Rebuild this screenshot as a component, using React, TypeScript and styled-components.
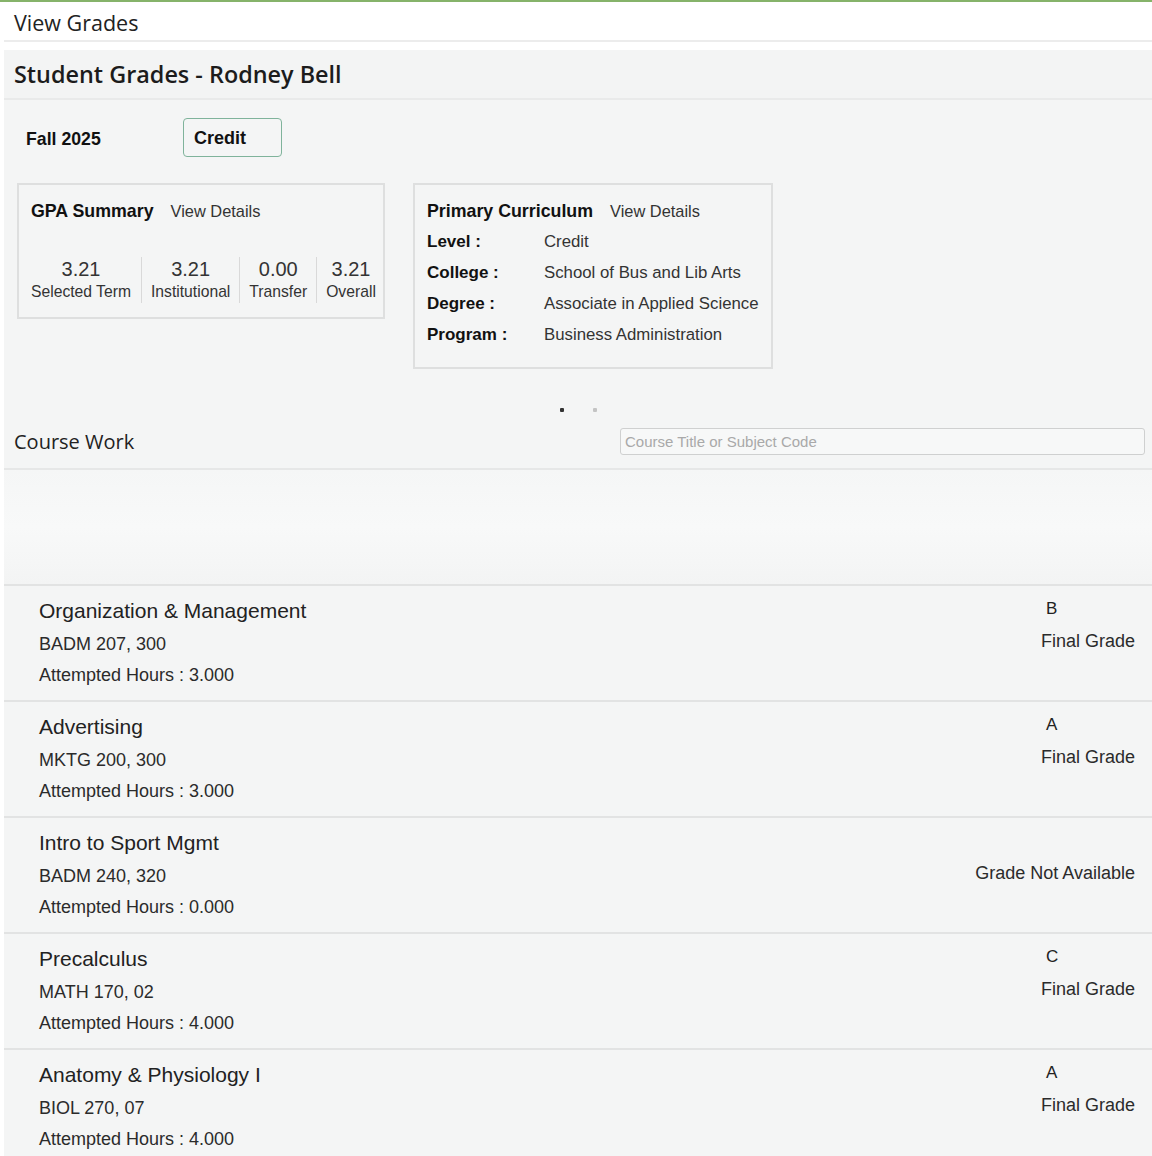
import styled, { createGlobalStyle } from "styled-components";

const GlobalStyle = createGlobalStyle`
    body {
        margin: 0;
        background: #ffffff;
        font-family: "Liberation Sans", Arial, sans-serif;
        color: #222;
    }
    * { box-sizing: border-box; }
`;

interface Course {
    title: string
    code: string
    hours: string
    grade?: string
}

const courses: Course[] = [
    {title: "Organization & Management", code: "BADM 207, 300", hours: "3.000", grade: "B"},
    {title: "Advertising", code: "MKTG 200, 300", hours: "3.000", grade: "A"},
    {title: "Intro to Sport Mgmt", code: "BADM 240, 320", hours: "0.000"},
    {title: "Precalculus", code: "MATH 170, 02", hours: "4.000", grade: "C"},
    {title: "Anatomy & Physiology I", code: "BIOL 270, 07", hours: "4.000", grade: "A"},
];

const gpa = [
    {value: "3.21", label: "Selected Term"},
    {value: "3.21", label: "Institutional"},
    {value: "0.00", label: "Transfer"},
    {value: "3.21", label: "Overall"},
];

const curriculum = [
    {label: "Level :", value: "Credit"},
    {label: "College :", value: "School of Bus and Lib Arts"},
    {label: "Degree :", value: "Associate in Applied Science"},
    {label: "Program :", value: "Business Administration"},
];

const Page = styled.div`
    padding-left: 4px;
    border-top: 2px solid #86b36a;
    min-height: 1156px;
    background: #ffffff;
`;

const TopBar = styled.div`
    height: 40px;
    display: flex;
    align-items: center;
    padding: 2px 0 0 10px;
    font-family: "Open Sans", sans-serif;
    font-size: 21.5px;
    color: #222;
    border-bottom: 2px solid #ececec;
`;

const TitleBar = styled.div`
    margin-top: 8px;
    height: 50px;
    display: flex;
    align-items: center;
    padding-left: 10px;
    background: #f3f4f4;
    border-bottom: 2px solid #e9eaea;
    font-family: "Open Sans", sans-serif;
    font-weight: 600;
    font-size: 23.4px;
    color: #1c1c1c;
`;

const Content = styled.div`
    background: #f4f5f5;
`;

const TermRow = styled.div`
    display: flex;
    align-items: center;
    padding: 17px 0 0 22px;
    height: 57px;
`;

const TermLabel = styled.div`
    width: 157px;
    padding-top: 4px;
    font-weight: bold;
    font-size: 17.7px;
    color: #111;
`;

const LevelButton = styled.div`
    width: 99px;
    height: 39px;
    display: flex;
    align-items: center;
    padding: 3px 0 0 10px;
    border: 1.5px solid #7fb39b;
    border-radius: 4px;
    font-weight: bold;
    font-size: 18px;
    color: #111;
`;

const Cards = styled.div`
    display: flex;
    align-items: flex-start;
    gap: 28px;
    padding: 26px 0 0 13px;
`;

const Card = styled.div<{ $width: number }>`
    width: ${p => p.$width}px;
    border: 2px solid #dedfdf;
    background: #f4f5f5;
    padding: 14px 8px 0 12px;
`;

const CardHead = styled.div`
    display: flex;
    align-items: center;
    gap: 17px;
    height: 24px;
    white-space: nowrap;
`;

const CardTitle = styled.span`
    font-weight: bold;
    font-size: 17.8px;
    color: #111;
`;

const CardLink = styled.span`
    font-size: 16.4px;
    color: #333;
`;

const Stats = styled.div`
    display: flex;
    margin-top: 34px;
    padding-bottom: 14px;
`;

const Stat = styled.div`
    display: flex;
    flex-direction: column;
    align-items: center;
    padding: 0 9px;
    border-left: 1px solid #d9d9d9;
    white-space: nowrap;

    &:first-child {
        padding-left: 0;
        padding-right: 10px;
        border-left: none;
    }
`;

const StatValue = styled.div`
    font-size: 20px;
    line-height: 24px;
    color: #333;
`;

const StatLabel = styled.div`
    font-size: 15.7px;
    line-height: 22px;
    color: #333;
`;

const InfoRows = styled.div`
    padding: 3px 0 17px 0;
`;

const InfoRow = styled.div`
    display: flex;
    height: 31px;
    align-items: center;
    white-space: nowrap;
`;

const InfoLabel = styled.div`
    width: 117px;
    flex-shrink: 0;
    font-weight: bold;
    font-size: 17px;
    color: #111;
`;

const InfoValue = styled.div`
    font-size: 16.8px;
    color: #333;
`;

const Dots = styled.div`
    display: flex;
    justify-content: center;
    gap: 29px;
    padding: 39px 0 0 0;
    height: 43px;
`;

const Dot = styled.span<{ $active?: boolean }>`
    width: 4px;
    height: 4px;
    border-radius: 1px;
    background: ${p => p.$active ? "#333" : "#c4c4c4"};
`;

const WorkHeader = styled.div`
    display: flex;
    align-items: center;
    justify-content: space-between;
    height: 58px;
    padding: 3px 7px 0 10px;
    border-bottom: 2px solid #e6e7e7;
`;

const WorkTitle = styled.div`
    font-family: "Open Sans", sans-serif;
    font-size: 20px;
    color: #222;
`;

const Search = styled.input`
    width: 525px;
    height: 27px;
    border: 1px solid #cfd0d0;
    border-radius: 3px;
    background: #f7f8f8;
    padding: 0 4px;
    font-family: "Liberation Sans", Arial, sans-serif;
    font-size: 15px;

    &::placeholder {
        color: #a9a9a9;
    }
`;

const Blank = styled.div`
    height: 116px;
    background: linear-gradient(180deg, #f5f6f6 0%, #f8f9f9 50%, #f3f4f4 100%);
    border-bottom: 2px solid #e2e3e3;
`;

const Row = styled.div`
    display: flex;
    justify-content: space-between;
    height: 116px;
    padding: 10px 17px 0 35px;
    border-bottom: 2px solid #e2e3e3;
`;

const CourseInfo = styled.div`
    display: flex;
    flex-direction: column;
`;

const CourseTitle = styled.div`
    font-size: 21px;
    line-height: 30px;
    margin-bottom: 3px;
    color: #222;
`;

const CourseLine = styled.div`
    font-size: 18px;
    line-height: 31px;
    color: #2b2b2b;
`;

const GradeBox = styled.div`
    display: flex;
    flex-direction: column;
    margin-top: -4px;
`;

const GradeLetter = styled.div`
    font-size: 17px;
    line-height: 33px;
    height: 33px;
    padding-left: 5px;
    color: #222;
`;

const GradeLabel = styled.div`
    font-size: 18px;
    line-height: 33px;
    color: #2b2b2b;
`;

function CourseRow({course}: { course: Course }) {
    return (
        <Row>
            <CourseInfo>
                <CourseTitle>{course.title}</CourseTitle>
                <CourseLine>{course.code}</CourseLine>
                <CourseLine>Attempted Hours : {course.hours}</CourseLine>
            </CourseInfo>
            <GradeBox>
                <GradeLetter>{course.grade ?? ""}</GradeLetter>
                <GradeLabel>{course.grade ? "Final Grade" : "Grade Not Available"}</GradeLabel>
            </GradeBox>
        </Row>
    );
}

export default function App() {
    return (
        <>
            <GlobalStyle/>
            <Page>
                <TopBar>View Grades</TopBar>
                <TitleBar>Student Grades - Rodney Bell</TitleBar>
                <Content>
                    <TermRow>
                        <TermLabel>Fall 2025</TermLabel>
                        <LevelButton>Credit</LevelButton>
                    </TermRow>

                    <Cards>
                        <Card $width={368}>
                            <CardHead>
                                <CardTitle>GPA Summary</CardTitle>
                                <CardLink>View Details</CardLink>
                            </CardHead>
                            <Stats>
                                {gpa.map(g => (
                                    <Stat key={g.label}>
                                        <StatValue>{g.value}</StatValue>
                                        <StatLabel>{g.label}</StatLabel>
                                    </Stat>
                                ))}
                            </Stats>
                        </Card>

                        <Card $width={360}>
                            <CardHead>
                                <CardTitle>Primary Curriculum</CardTitle>
                                <CardLink>View Details</CardLink>
                            </CardHead>
                            <InfoRows>
                                {curriculum.map(c => (
                                    <InfoRow key={c.label}>
                                        <InfoLabel>{c.label}</InfoLabel>
                                        <InfoValue>{c.value}</InfoValue>
                                    </InfoRow>
                                ))}
                            </InfoRows>
                        </Card>
                    </Cards>

                    <Dots>
                        <Dot $active/>
                        <Dot/>
                    </Dots>

                    <WorkHeader>
                        <WorkTitle>Course Work</WorkTitle>
                        <Search placeholder="Course Title or Subject Code"/>
                    </WorkHeader>

                    <Blank/>

                    {courses.map(c => <CourseRow key={c.title} course={c}/>)}
                </Content>
            </Page>
        </>
    );
}
